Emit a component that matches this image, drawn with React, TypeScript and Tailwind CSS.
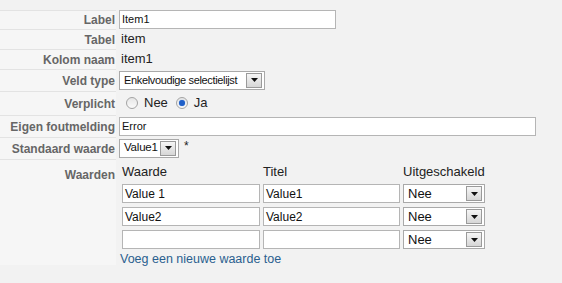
import React from "react";

function Select({ value, width, textClass = "text-[11px]" }: { value: string; width: string; textClass?: string }) {
  return (
    <div className={`${width} h-[19px] flex items-center justify-between bg-white border border-[#a9a9a9] pl-[4px] pr-[2px]`}>
      <span className={`${textClass} text-[#111] leading-none whitespace-nowrap`}>{value}</span>
      <div className="w-[16px] h-[15px] shrink-0 flex items-center justify-center border border-[#9a9a9a] bg-gradient-to-b from-[#f6f6f6] to-[#d6d6d6]">
        <svg width="7" height="4" viewBox="0 0 7 4">
          <path d="M0 0h7L3.5 4z" fill="#111" />
        </svg>
      </div>
    </div>
  );
}

function Radio({ checked }: { checked?: boolean }) {
  return (
    <span className="w-[12px] h-[12px] rounded-full border border-[#a3a3a3] bg-gradient-to-b from-[#e6e6e6] to-[#fafafa] flex items-center justify-center">
      {checked && <span className="w-[6px] h-[6px] rounded-full bg-[#1f5fc8] shadow-[0_0_1px_#6aa0ee]" />}
    </span>
  );
}

function Row({ label, height, top, children }: { label: string; height: string; top?: boolean; children: React.ReactNode }) {
  return (
    <div className={`flex ${height}`}>
      <div
        className={`w-[116px] shrink-0 flex justify-end border-t border-[#e3e3e3] bg-[#f6f6f6] pr-[1px] text-[12px] font-bold text-[#666] ${
          top ? "items-start pt-[6px]" : "items-center"
        }`}
      >
        {label}
      </div>
      <div className={`flex-1 pl-[3px] flex ${top ? "items-start" : "items-center"}`}>{children}</div>
    </div>
  );
}

const inputCls = "h-[19px] bg-white border border-[#b5b5b5] px-[2px] text-[#111] flex items-center";

export default function App() {
  const rows = [
    { waarde: "Value 1", titel: "Value1" },
    { waarde: "Value2", titel: "Value2" },
    { waarde: "", titel: "" },
  ];

  return (
    <main className="w-[562px] h-[283px] bg-[#f2f2f2] pt-[10px] font-['Liberation_Sans',Arial,sans-serif] overflow-hidden">
      <Row label="Label" height="h-[19px]">
        <div className={`${inputCls} w-[217px] h-[18px] text-[11px]`}>Item1</div>
      </Row>
      <Row label="Tabel" height="h-[20px]">
        <span className="text-[13px] text-[#222] pl-[2px]">item</span>
      </Row>
      <Row label="Kolom naam" height="h-[20px]">
        <span className="text-[13px] text-[#222] pl-[2px]">item1</span>
      </Row>
      <Row label="Veld type" height="h-[22px]">
        <Select value="Enkelvoudige selectielijst" width="w-[146px]" textClass="text-[11px] tracking-[-0.35px]" />
      </Row>
      <Row label="Verplicht" height="h-[24px]">
        <div className="flex items-center pl-[7px] text-[13px] text-[#222]">
          <Radio />
          <span className="ml-[6px] mr-[8px]">Nee</span>
          <Radio checked />
          <span className="ml-[6px]">Ja</span>
        </div>
      </Row>
      <Row label="Eigen foutmelding" height="h-[22px]">
        <div className={`${inputCls} w-[417px] h-[18px] text-[11px]`}>Error</div>
      </Row>
      <Row label="Standaard waarde" height="h-[22px]">
        <div className="flex items-start">
          <Select value="Value1" width="w-[60px]" textClass="text-[11.5px] tracking-[-0.2px]" />
          <span className="ml-[5px] text-[12px] text-[#222] leading-none mt-[1px]">*</span>
        </div>
      </Row>
      <Row label="Waarden" height="h-[106px]" top>
        <div className="flex flex-col">
          <div className="grid grid-cols-[138px_137px_82px] gap-x-[3px] gap-y-[4px] pl-[3px] pt-[5px]">
            <span className="text-[13px] text-[#222] leading-[15px] h-[16px]">Waarde</span>
            <span className="text-[13px] text-[#222] leading-[15px] h-[16px]">Titel</span>
            <span className="text-[13px] text-[#222] leading-[15px] h-[16px]">Uitgeschakeld</span>
            {rows.map((r, i) => (
              <React.Fragment key={i}>
                <div className={`${inputCls} h-[18px] text-[12px]`}>{r.waarde}</div>
                <div className={`${inputCls} h-[18px] text-[12px]`}>{r.titel}</div>
                <Select value="Nee" width="w-[82px]" textClass="text-[13px]" />
              </React.Fragment>
            ))}
          </div>
          <a className="pl-[1px] mt-[3px] text-[12.5px] text-[#2a5f8f] leading-[15px]" href="#">
            Voeg een nieuwe waarde toe
          </a>
        </div>
      </Row>
    </main>
  );
}
